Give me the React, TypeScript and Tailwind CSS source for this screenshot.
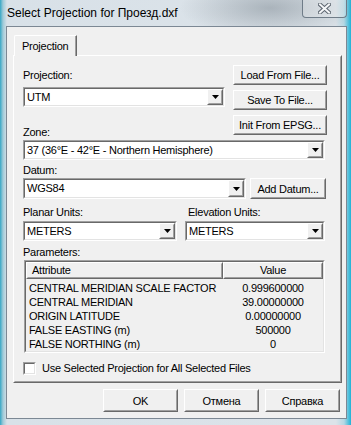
import React from "react"

// classic (unthemed) 3D edges, Win7 system colours
const raisedOuter = "border border-t-white border-l-white border-r-[#696969] border-b-[#696969]"
const raisedInner = "border border-t-[#f0f0f0] border-l-[#f0f0f0] border-r-[#a0a0a0] border-b-[#a0a0a0]"
const sunkenOuter = "border border-t-[#a0a0a0] border-l-[#a0a0a0] border-r-white border-b-white"
const sunkenInner = "border border-t-[#696969] border-l-[#696969] border-r-[#e3e3e3] border-b-[#e3e3e3]"

function Raised({ className = "", children }: { className?: string; children?: React.ReactNode }) {
    return (
        <div className={`${raisedOuter} bg-[#f0f0f0] ${className}`}>
            <div className={`${raisedInner} flex h-full w-full items-center justify-center`}>
                {children}
            </div>
        </div>
    )
}

function Sunken({
    className = "",
    inner = "",
    children,
}: {
    className?: string
    inner?: string
    children?: React.ReactNode
}) {
    return (
        <div className={`${sunkenOuter} ${className}`}>
            <div className={`${sunkenInner} h-full w-full ${inner}`}>{children}</div>
        </div>
    )
}

function Arrow() {
    return (
        <svg width="7" height="4" viewBox="0 0 7 4">
            <path d="M0 0h7L3.5 4z" fill="#000" />
        </svg>
    )
}

function Combo({ value, className = "" }: { value: string; className?: string }) {
    return (
        <Sunken className={className} inner="flex bg-white">
            <span className="flex-1 truncate pl-[2px] leading-[16px]">{value}</span>
            <Raised className="h-full w-[16px]">
                <Arrow />
            </Raised>
        </Sunken>
    )
}

function Button({ label, className = "" }: { label: string; className?: string }) {
    return (
        <Raised className={className}>
            <span className="leading-[14px]">{label}</span>
        </Raised>
    )
}

const params = [
    ["CENTRAL MERIDIAN SCALE FACTOR", "0.999600000"],
    ["CENTRAL MERIDIAN", "39.00000000"],
    ["ORIGIN LATITUDE", "0.00000000"],
    ["FALSE EASTING (m)", "500000"],
    ["FALSE NORTHING (m)", "0"],
]

export default function App() {
    return (
        <div className="h-[425px] w-[351px] overflow-hidden bg-[linear-gradient(to_right,#35a7c5_0px,#9fcad8_3px,#d8e1e8_7px,#dce3e9_336px,#b5d8e4_344px,#1fb3d7_351px)] font-['Liberation_Sans',Arial,sans-serif] text-[11px] tracking-[-0.25px] text-black">
            {/* title bar */}
            <div className="flex h-[26px] items-start justify-between bg-[radial-gradient(ellipse_90px_30px_at_270px_8px,rgba(110,122,132,0.45),transparent)]">
                <span className="pl-[7px] pt-[6px] text-[12px] leading-[15px] tracking-normal">
                    Select Projection for Проезд.dxf
                </span>
                <div className="mr-[4px] flex h-[18px] w-[45px] items-center justify-center rounded-b-[4px] border border-t-0 border-[#6f7c88] bg-white/25">
                    <svg width="13" height="11" viewBox="0 0 13 11">
                        <path d="M2 1.5l9 8M11 1.5l-9 8" stroke="#5d6670" strokeWidth="4" strokeLinecap="square" />
                        <path d="M2 1.5l9 8M11 1.5l-9 8" stroke="#f4f6f8" strokeWidth="2" strokeLinecap="square" />
                    </svg>
                </div>
            </div>

            {/* client area */}
            <div className="ml-[6px] w-[341px] border border-[#7c8894] bg-[#f0f0f0] pb-[6px] pl-[6px] pr-[5px] pt-[8px]">
                {/* tab header */}
                <div className="flex">
                    <div className="relative z-10 -mb-[1px] ml-[1px] h-[21px] w-[63px] rounded-tl-[2px] border-l border-r border-t border-l-white border-r-[#696969] border-t-white bg-[#f0f0f0]">
                        <div className="h-full border-r border-r-[#a0a0a0] pl-[7px] pt-[3px] leading-[14px]">
                            Projection
                        </div>
                    </div>
                </div>

                {/* tab page */}
                <div className={`h-[328px] w-[329px] ${raisedOuter}`}>
                    <div className={`h-full ${raisedInner} pl-[8px] pt-[8px]`}>
                        <div className="flex gap-[8px]">
                            <div className="flex w-[202px] flex-col">
                                <span className="mt-[3px] leading-[14px]">Projection:</span>
                                <Combo value="UTM" className="mt-[5px] h-[20px]" />
                                <span className="mt-[18px] leading-[14px]">Zone:</span>
                            </div>
                            <div className="flex w-[94px] flex-col gap-[5px]">
                                <Button label="Load From File..." className="h-[20px]" />
                                <Button label="Save To File..." className="h-[20px]" />
                                <Button label="Init From EPSG..." className="h-[20px]" />
                            </div>
                        </div>

                        <Combo
                            value="37 (36°E - 42°E - Northern Hemisphere)"
                            className="mt-[1px] h-[20px] w-[302px]"
                        />

                        <div className="mt-[3px] leading-[14px]">Datum:</div>
                        <div className="mt-[1px] flex gap-[4px]">
                            <Combo value="WGS84" className="h-[21px] w-[223px]" />
                            <Button label="Add Datum..." className="h-[21px] w-[76px]" />
                        </div>

                        <div className="mt-[6px] flex gap-[8px]">
                            <div className="flex w-[154px] flex-col">
                                <span className="leading-[14px]">Planar Units:</span>
                                <Combo value="METERS" className="mt-[2px] h-[20px]" />
                            </div>
                            <div className="flex w-[140px] flex-col">
                                <span className="pl-[3px] leading-[14px]">Elevation Units:</span>
                                <Combo value="METERS" className="mt-[2px] h-[20px]" />
                            </div>
                        </div>

                        <div className="mt-[4px] leading-[14px]">Parameters:</div>
                        <Sunken className="ml-[1px] mt-[1px] h-[93px] w-[301px]" inner="bg-[#f0f0f0]">
                            <div className="flex">
                                <Raised className="h-[17px] w-[197px]">
                                    <span className="w-full pl-[4px] leading-[13px]">Attribute</span>
                                </Raised>
                                <Raised className="h-[17px] w-[100px]">
                                    <span className="leading-[13px]">Value</span>
                                </Raised>
                            </div>
                            <div className="mt-[2px] flex flex-col">
                                {params.map(([name, value]) => (
                                    <div key={name} className="flex leading-[14px]">
                                        <span className="w-[197px] pl-[3px]">{name}</span>
                                        <span className="w-[100px] text-center">{value}</span>
                                    </div>
                                ))}
                            </div>
                        </Sunken>

                        <div className="mt-[8px] flex items-center">
                            <Sunken className="h-[13px] w-[13px]" inner="bg-white" />
                            <span className="ml-[6px] leading-[14px]">
                                Use Selected Projection for All Selected Files
                            </span>
                        </div>
                    </div>
                </div>

                {/* dialog buttons */}
                <div className="mt-[6px] flex justify-end gap-[6px] pr-[1px]">
                    <Button label="OK" className="h-[23px] w-[75px]" />
                    <Button label="Отмена" className="h-[23px] w-[75px]" />
                    <Button label="Справка" className="h-[23px] w-[75px]" />
                </div>
            </div>
        </div>
    )
}
